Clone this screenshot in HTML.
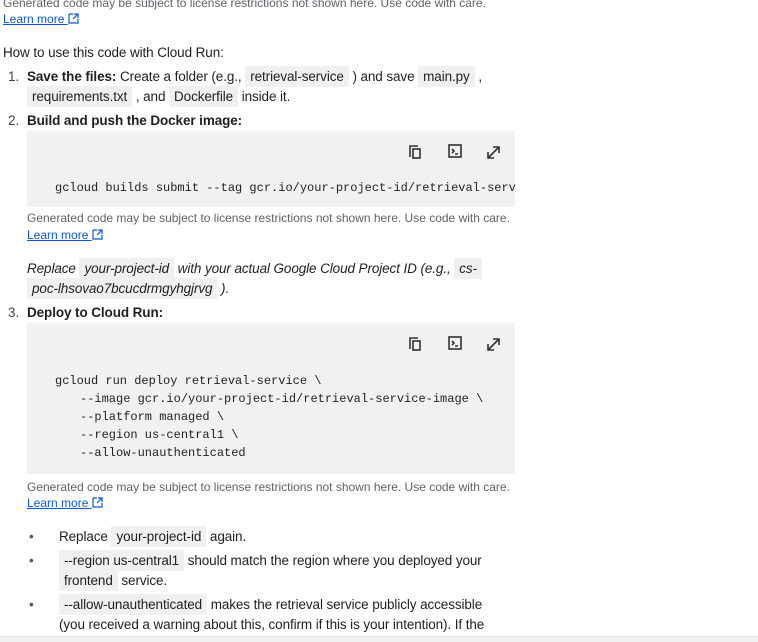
<!DOCTYPE html>
<html><head><meta charset="utf-8"><style>
body{margin:0;width:758px;height:641px;overflow:hidden;background:#fff;font-family:"Liberation Sans",sans-serif;color:#1f1f1f;position:relative}
.a{position:absolute;white-space:nowrap;line-height:20px}
.s{font-size:12px;color:#5f6368}
.l{font-size:12px;color:#0b57d0;text-decoration:underline}
.t{font-size:13.5px;letter-spacing:-0.1px}
.c{background:#eef0f2;padding:3px 5px}
.cb{position:absolute;left:27px;width:488px;background:#f0f1f3}
.m{font-family:"Liberation Mono",monospace;font-size:12px;color:#1f1f1f;position:absolute;white-space:pre;line-height:18px}
b{font-weight:bold}
</style></head><body>
<div class="a s" style="left:3px;top:-7px">Generated code may be subject to license restrictions not shown here. Use code with care.</div>
<div class="a l" style="left:3px;top:9px">Learn more <svg width="11" height="11" viewBox="0 0 11 11" style="vertical-align:-1px"><path d="M1 1h4M1 1v9h9V6M6 1h4v4M10 1L5 6" stroke="#0b57d0" fill="none" stroke-width="1.2"/></svg></div>
<div class="a t" style="left:3px;top:43px">How to use this code with Cloud Run:</div>
<div class="a t" style="left:8px;top:67px;color:#444">1.</div>
<div class="a t" style="left:27px;top:67px"><b>Save the files:</b> Create a folder (e.g., <span class="c">retrieval-service</span> ) and save <span class="c">main.py</span> ,</div>
<div class="a t" style="left:27px;top:87px"><span class="c">requirements.txt</span> , and <span class="c">Dockerfile</span> inside it.</div>
<div class="a t" style="left:8px;top:111px;color:#444">2.</div>
<div class="a t" style="left:27px;top:111px"><b>Build and push the Docker image:</b></div>
<div class="cb" style="top:131px;height:76px"></div>
<div class="m" style="left:55px;top:179px">gcloud builds submit --tag gcr.io/your-project-id/retrieval-serv</div>
<div class="a s" style="left:27px;top:208px">Generated code may be subject to license restrictions not shown here. Use code with care.</div>
<div class="a l" style="left:27px;top:225px">Learn more <svg width="11" height="11" viewBox="0 0 11 11" style="vertical-align:-1px"><path d="M1 1h4M1 1v9h9V6M6 1h4v4M10 1L5 6" stroke="#0b57d0" fill="none" stroke-width="1.2"/></svg></div>
<div class="a t" style="left:27px;top:259px;font-style:italic">Replace <span class="c">your-project-id</span> with your actual Google Cloud Project ID (e.g., <span class="c">cs-</span></div>
<div class="a t" style="left:27px;top:279px;font-style:italic"><span class="c">poc-lhsovao7bcucdrmgyhgjrvg</span> ).</div>
<div class="a t" style="left:8px;top:303px;color:#444">3.</div>
<div class="a t" style="left:27px;top:303px"><b>Deploy to Cloud Run:</b></div>
<div class="cb" style="top:323px;height:151px"></div>
<div class="m" style="left:55px;top:372px">gcloud run deploy retrieval-service \</div>
<div class="m" style="left:80px;top:390px">--image gcr.io/your-project-id/retrieval-service-image \
--platform managed \
--region us-central1 \
--allow-unauthenticated</div>
<div class="a s" style="left:27px;top:477px">Generated code may be subject to license restrictions not shown here. Use code with care.</div>
<div class="a l" style="left:27px;top:493px">Learn more <svg width="11" height="11" viewBox="0 0 11 11" style="vertical-align:-1px"><path d="M1 1h4M1 1v9h9V6M6 1h4v4M10 1L5 6" stroke="#0b57d0" fill="none" stroke-width="1.2"/></svg></div>
<div class="a t" style="left:29px;top:527px;color:#555">•</div>
<div class="a t" style="left:59px;top:527px">Replace <span class="c">your-project-id</span> again.</div>
<div class="a t" style="left:29px;top:551px;color:#555">•</div>
<div class="a t" style="left:59px;top:551px"><span class="c">--region us-central1</span> should match the region where you deployed your</div>
<div class="a t" style="left:59px;top:571px"><span class="c">frontend</span> service.</div>
<div class="a t" style="left:29px;top:595px;color:#555">•</div>
<div class="a t" style="left:59px;top:595px"><span class="c">--allow-unauthenticated</span> makes the retrieval service publicly accessible</div>
<div class="a t" style="left:59px;top:615px">(you received a warning about this, confirm if this is your intention). If the</div>
<div style="position:absolute;left:0;top:636px;width:758px;height:5px;background:#f1f1f1;border-top:1px solid #e3e3e3"></div>
<svg style="position:absolute;left:0;top:0" width="758" height="641">
<g fill="none" stroke="#333" stroke-width="1.6">
<path d="M410 157v-11h8"/><rect x="413" y="149" width="7" height="9"/>
<rect x="449" y="145" width="12" height="12"/><path d="M452 149l2 2-2 2M455 154h3"/>
<path d="M488 158l11-11M488 152v6h6M493 147h6v6"/>
</g>
<g fill="none" stroke="#333" stroke-width="1.6">
<path d="M410 349v-11h8"/><rect x="413" y="341" width="7" height="9"/>
<rect x="449" y="337" width="12" height="12"/><path d="M452 341l2 2-2 2M455 346h3"/>
<path d="M488 350l11-11M488 344v6h6M493 339h6v6"/>
</g>
</svg>
</body></html>
